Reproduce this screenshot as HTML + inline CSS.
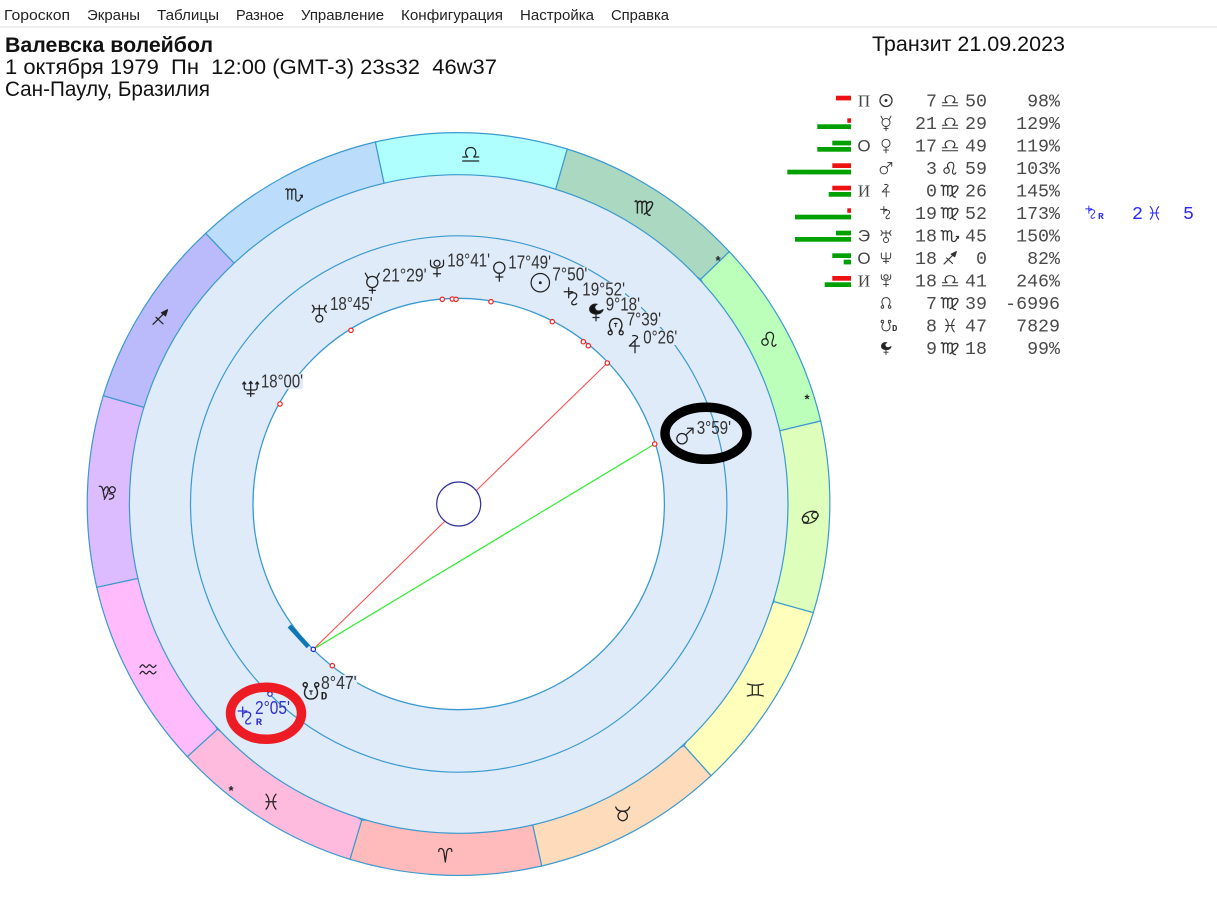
<!DOCTYPE html>
<html lang="ru"><head><meta charset="utf-8"><title>Транзит</title>
<style>
html,body{margin:0;padding:0;background:#fff;width:1217px;height:909px;overflow:hidden}
svg{display:block}
.m{font:15px "Liberation Sans","Noto Sans CJK SC",sans-serif;fill:#222}
.h{font:21px "Liberation Sans","Noto Sans CJK SC",sans-serif;fill:#111}
.l{font:18.5px "Liberation Sans",sans-serif;fill:#333}
.t{font:18.3px "Liberation Mono",monospace;fill:#4a4a4a}
.c{font:17px "Liberation Serif",serif;fill:#444}
.g{fill:none;stroke:#222;stroke-width:1.25;stroke-linecap:round;stroke-linejoin:round}
.s{fill:none;stroke:#333;stroke-width:1.3;stroke-linecap:round;stroke-linejoin:round}
.b{fill:none;stroke:#3030d8;stroke-width:1.3;stroke-linecap:round;stroke-linejoin:round}
.z path{stroke:#3a9ad0;stroke-width:1.2}
.star{font:bold 13px "Liberation Sans",sans-serif;fill:#222}
</style></head><body>
<svg xmlns="http://www.w3.org/2000/svg" width="1217" height="909" viewBox="0 0 1217 909">
<rect width="1217" height="909" fill="#fff"/>
<rect y="26" width="1217" height="2" fill="#f0f0f0"/>
<text class="m" x="4" y="20" textLength="66" lengthAdjust="spacingAndGlyphs">Гороскоп</text>
<text class="m" x="87" y="20" textLength="53" lengthAdjust="spacingAndGlyphs">Экраны</text>
<text class="m" x="157" y="20" textLength="62" lengthAdjust="spacingAndGlyphs">Таблицы</text>
<text class="m" x="236" y="20" textLength="48" lengthAdjust="spacingAndGlyphs">Разное</text>
<text class="m" x="301" y="20" textLength="83" lengthAdjust="spacingAndGlyphs">Управление</text>
<text class="m" x="401" y="20" textLength="102" lengthAdjust="spacingAndGlyphs">Конфигурация</text>
<text class="m" x="520" y="20" textLength="74" lengthAdjust="spacingAndGlyphs">Настройка</text>
<text class="m" x="611" y="20" textLength="58" lengthAdjust="spacingAndGlyphs">Справка</text>

<text class="h" x="5" y="52" style="font-weight:700" textLength="208" lengthAdjust="spacingAndGlyphs">Валевска волейбол</text>
<text class="h" x="5" y="74" xml:space="preserve" textLength="492" lengthAdjust="spacingAndGlyphs">1 октября 1979  Пн  12:00 (GMT-3) 23s32  46w37</text>
<text class="h" x="5" y="96" textLength="205" lengthAdjust="spacingAndGlyphs">Сан-Паулу, Бразилия</text>
<text class="h" x="872" y="51" textLength="193" lengthAdjust="spacingAndGlyphs">Транзит 21.09.2023</text>

<!-- zodiac ring -->
<g class="z">
<path fill="#b0ffff" d="M375.3 142A372 372 0 0 1 567.3 149L555.7 189.3L384 183.3Z"/>
<path fill="#aad8c0" d="M567.3 149A372 372 0 0 1 729.3 251.7L700.7 279.3L555.7 189.3Z"/>
<path fill="#bbffbb" d="M729.3 251.7A372 372 0 0 1 820.7 421L780 430.7L700.7 279.3Z"/>
<path fill="#ddffbb" d="M820.7 421A372 372 0 0 1 813.3 612.7L774 601.7L780 430.7Z"/>
<path fill="#ffffbb" d="M813.3 612.7A372 372 0 0 1 711 775.7L684 745.7L774 601.7Z"/>
<path fill="#fddbbb" d="M711 775.7A372 372 0 0 1 541.7 866L532.7 825L684 745.7Z"/>
<path fill="#ffbbbb" d="M541.7 866A372 372 0 0 1 350 859.3L361.7 820L532.7 825Z"/>
<path fill="#ffbbdd" d="M350 859.3A372 372 0 0 1 187.3 756.7L217.3 729.3L361.7 820Z"/>
<path fill="#ffbbfb" d="M187.3 756.7A372 372 0 0 1 96.7 587.3L138.3 578.3L217.3 729.3Z"/>
<path fill="#ddbbff" d="M96.7 587.3A372 372 0 0 1 103.3 395.7L144 407.3L138.3 578.3Z"/>
<path fill="#bbbbfb" d="M103.3 395.7A372 372 0 0 1 205.7 233.3L234 263L144 407.3Z"/>
<path fill="#bbddfb" d="M205.7 233.3A372 372 0 0 1 375.3 142L384 183.3L234 263Z"/>
</g>
<circle cx="458.7" cy="504" r="329.3" fill="#dfebf9" stroke="#3a9ad0" stroke-width="1.2"/>
<circle cx="458.7" cy="504" r="268.2" fill="#dfebf9" stroke="#3a9ad0" stroke-width="1.2"/>
<circle cx="458.7" cy="504" r="205.7" fill="#fff" stroke="#3a9ad0" stroke-width="1.3"/>

<!-- aspect lines -->
<line x1="607.3" y1="363" x2="313.3" y2="649.3" stroke="#ff5050" stroke-width="1.1"/>
<line x1="654.7" y1="444" x2="313.3" y2="649.3" stroke="#30ee30" stroke-width="1.2"/>
<circle cx="458.7" cy="504" r="22" fill="#fff" stroke="#3030a0" stroke-width="1.2"/>
<line x1="289.3" y1="626" x2="308.3" y2="646.7" stroke="#0f78b4" stroke-width="4.5"/>

<!-- points on circle -->
<g fill="#fff" stroke="#f02020" stroke-width="1.2">
<circle cx="280" cy="404" r="2.2"/><circle cx="351" cy="330.3" r="2.2"/><circle cx="442.3" cy="299.3" r="2.2"/><circle cx="452.3" cy="299" r="2.2"/><circle cx="456" cy="299.3" r="2.2"/><circle cx="491" cy="301.7" r="2.2"/><circle cx="552.3" cy="321.7" r="2.2"/><circle cx="583.3" cy="341.7" r="2.2"/><circle cx="588.3" cy="345.7" r="2.2"/><circle cx="607.3" cy="363" r="2.2"/><circle cx="654.7" cy="444" r="2.2"/><circle cx="332.3" cy="665.7" r="2.2"/>
</g>
<circle cx="313.3" cy="649.3" r="2.2" fill="#fff" stroke="#2020e0" stroke-width="1.2"/>
<circle cx="270" cy="694" r="2.2" fill="#fff" stroke="#2020e0" stroke-width="1.2"/>

<!-- label backgrounds -->
<g fill="#dfebf9">
<rect x="261" y="374" width="42" height="15"/><rect x="330" y="296" width="43" height="15"/><rect x="382" y="268" width="45" height="15"/><rect x="447" y="253" width="43" height="15"/><rect x="508" y="255" width="43" height="15"/><rect x="552" y="267" width="36" height="15"/><rect x="582" y="282" width="43" height="15"/><rect x="606" y="297" width="35" height="15"/><rect x="627" y="312" width="34" height="15"/><rect x="643" y="330" width="34" height="15"/><rect x="321" y="675" width="36" height="15"/>
</g>

<!-- chart labels -->
<g>
<text class="l" x="261" y="387.7" textLength="42" lengthAdjust="spacingAndGlyphs">18°00'</text>
<text class="l" x="330" y="310" textLength="42.7" lengthAdjust="spacingAndGlyphs">18°45'</text>
<text class="l" x="382.3" y="281.7" textLength="44.4" lengthAdjust="spacingAndGlyphs">21°29'</text>
<text class="l" x="447.3" y="266.7" textLength="42.7" lengthAdjust="spacingAndGlyphs">18°41'</text>
<text class="l" x="508.3" y="268.3" textLength="42.7" lengthAdjust="spacingAndGlyphs">17°49'</text>
<text class="l" x="552.3" y="280.7" textLength="35" lengthAdjust="spacingAndGlyphs">7°50'</text>
<text class="l" x="582.3" y="295.7" textLength="42.7" lengthAdjust="spacingAndGlyphs">19°52'</text>
<text class="l" x="605.7" y="310.7" textLength="34.3" lengthAdjust="spacingAndGlyphs">9°18'</text>
<text class="l" x="626.7" y="325.7" textLength="34.3" lengthAdjust="spacingAndGlyphs">7°39'</text>
<text class="l" x="643.3" y="343.3" textLength="34" lengthAdjust="spacingAndGlyphs">0°26'</text>
<text class="l" x="696.7" y="434" textLength="34.3" lengthAdjust="spacingAndGlyphs">3°59'</text>
<text class="l" x="321" y="689" textLength="35.7" lengthAdjust="spacingAndGlyphs">8°47'</text>
<text class="l" x="255" y="714" textLength="35" lengthAdjust="spacingAndGlyphs" style="fill:#3030c8">2°05'</text>
</g>

<!-- chart planet glyphs -->
<g class="g">
<g transform="translate(250.7 389)"><path d="M-6.5-7V-2Q-6.5 1-4 1H4Q6.5 1 6.500-2V-7M0-7.500V7.500M-3.500 4.700H3.500M-8-5L-6.500-7L-5-5M-1.500-5.500L0-7.500L1.500-5.500M5-5L6.500-7L8-5"/></g>
<g transform="translate(319.3 312.3)"><path d="M-7-7C-4.500-5-4.500-2-7 0M7-7C4.500-5 4.500-2 7 0M-5.500-3.500H5.500M0-7V3"/><circle cy="6.300" r="3.500"/></g>
<g transform="translate(372.3 282.7)"><path d="M-7-9.500L-4.500-5M7-9.500L4.500-5M0 5V10.500M-3 7.700H3"/><circle cy="-.7" r="5.600"/></g>
<g transform="translate(437 268.3)"><circle cy="-5" r="3"/><path d="M-6.500-8V-4C-6.500 1 6.500 1 6.500-4V-8M0 .5V8.500M-3.500 5.500H3.500"/></g>
<g transform="translate(499.3 270.7)"><circle cy="-3" r="5.600"/><path d="M0 2.600V10.500M-3.500 6.300H3.500"/></g>
<g transform="translate(540.3 282.7)"><circle r="9.200"/><circle r=".8" fill="#222"/></g>
<g transform="translate(571.7 296.7)"><path d="M-3-9V1M-7.500-5H1M-3-2C0-5 5-4.500 5-1C5 2 0 4 0 6C0 8.500 3 8.500 5 7"/></g>
<g transform="translate(596 311.7)"><path fill="#111" d="M-2-7.500C-7.500-6-8 1-2 2C3 3 6 1 7-2C4 0 0 0-1-3C-2-5-1-6.500 1-7.500Z"/><path d="M0 2V9M-3 5.800H3"/></g>
<g transform="translate(615.700 326.700) scale(1.1)"><path d="M-3.500 4C-7.500-1-5.500-7.500 0-7.500C5.500-7.500 7.500-1 3.500 4"/><circle cx="-5" cy="5.500" r="1.800"/><circle cx="5" cy="5.500" r="1.800"/><path d="M-1.200-3H1.200M0-3V0" stroke-width="1"/></g>
<g transform="translate(634.700 344)"><path d="M-2-8.300C1-9 3.500-7.500 2.700-6L-5.300 2H4.700M.3-3V8.700"/></g>
<g transform="translate(685 435.700)"><circle cx="-3" cy="3" r="5.200"/><path d="M.8-.8L8-7.500M2.500-7.500H8V-2.500"/></g>
<g transform="translate(311 691) scale(1.15)"><path d="M-3.500-4C-7.500 1-5.500 7 0 7C5.500 7 7.500 1 3.500-4"/><circle cx="-5" cy="-5.500" r="1.800"/><circle cx="5" cy="-5.500" r="1.800"/><path d="M-1.200 0H1.200M0 0V3" stroke-width="1"/></g>
</g>
<text x="320.7" y="699.3" style="font:bold 11px 'Liberation Mono',monospace;fill:#222">D</text>
<g class="b"><g transform="translate(245.700 716)"><path d="M-3-9V1M-7.500-5H1M-3-2C0-5 5-4.500 5-1C5 2 0 4 0 6C0 8.500 3 8.500 5 7"/></g></g>
<text x="255.700" y="725" style="font:bold 10.500px 'Liberation Mono',monospace;fill:#3030c8">R</text>

<!-- zodiac glyphs -->
<g class="g">
<g transform="translate(470.700 154)"><path d="M-8 7H8M-8 3H-3C-6.500 0-5.500-6.500 0-6.500C5.500-6.500 6.500 0 3 3H8"/></g>
<g transform="translate(644.300 207.300) scale(1.15)"><path d="M-8-5C-7-6.500-6-5-6-3V5M-6-3C-5-6-2-6-2-3V5M-2-3C-1-6 2-6 2-3V3C2 5 3 7 5 7M2-3C5-6 8-5 7-2C6 1 3 4 0 6"/></g>
<g transform="translate(769 339)"><circle cx="-4" cy="3" r="3.200"/><path d="M-2 .5C-6-7 4-9.500 4.500-3C5 0 1.500 3.500 3.500 6.500C4.500 8 6.500 7 7 5.500"/></g>
<g transform="translate(810 517.300)"><circle cx="-4.500" cy="2" r="3.200"/><circle cx="5" cy="-2" r="3.200"/><path d="M-7.700 1.500C-6.500-5 1-7 6.500-5.500M7.700-1.500C6.500 5-1 7-6.500 5.500"/></g>
<g transform="translate(755.300 690)"><path d="M-8-6C-3-4.500 3-4.500 8-6M-8 6C-3 4.500 3 4.500 8 6M-3-5V5M3-5V5"/></g>
<g transform="translate(622.700 814)"><circle cy="2" r="4.700"/><path d="M-7-7C-6-4-3-2.700 0-2.700C3-2.700 6-4 7-7"/></g>
<g transform="translate(445.300 855)"><path d="M-6.500-3.500C-7-7.500-2.500-7.500-1.500-3.500L0 7L1.500-3.500C2.500-7.500 7-7.500 6.500-3.500"/></g>
<g transform="translate(271 801.700)"><path d="M-5-7.500C-1-3-1 3-5 7.500M5-7.500C1-3 1 3 5 7.500M-5 0H5"/></g>
<g transform="translate(148 669.300)"><path d="M-8-2C-6-5-5-5-3.500-3C-2-1-1-2 0-3.500C1-5 2-5 3.500-3C5-1 6.500-2 8-4M-8 4.500C-6 1.500-5 1.500-3.500 3.500C-2 5.500-1 4.500 0 3C1 1.500 2 1.500 3.500 3.500C5 5.500 6.500 4.500 8 2.500"/></g>
<g transform="translate(107.300 492.300)"><path d="M-8-6C-6-6.500-5-5-4.500-3L-3 5M-3.500-2C-2-6 1-7 1-3C1 0-1 4-3 7"/><circle cx="5" cy="-2.500" r="3"/><path d="M2 1.500C8 1.500 8 6 2 7"/></g>
<g transform="translate(160 317.300)"><path d="M-7 7L6-6M-4 0L3 6.500"/><path d="M1.500-4.500L7.500-7.500L5.500-1.500Z" fill="#222"/></g>
<g transform="translate(294.300 194.300)"><path d="M-8.500-5C-7.500-6.500-6.500-5-6.500-3V5M-6.500-3C-5.500-6-2.500-6-2.500-3V5M-2.500-3C-1.500-6 1.500-6 1.500-3V4C1.500 7.500 5 7.500 6 4.500L8 1M6 1H8V3"/></g>
</g>
<text class="star" x="715.500" y="265">*</text>
<text class="star" x="804.500" y="403.500">*</text>
<text class="star" x="228.500" y="795">*</text>

<!-- ellipses -->
<ellipse cx="706" cy="433.300" rx="41" ry="26" fill="none" stroke="#000" stroke-width="9.500"/>
<ellipse cx="266" cy="713.300" rx="35.500" ry="26" fill="none" stroke="#ed1c24" stroke-width="9.500"/>

<!-- bars -->
<g fill="#ee1111">
<rect x="836" y="95.700" width="15" height="4.700"/><rect x="847.300" y="118.300" width="3.700" height="4.500"/><rect x="832.300" y="163.300" width="18.700" height="4.700"/><rect x="832.300" y="185.700" width="18.700" height="4.700"/><rect x="847.300" y="208.300" width="3.700" height="4.500"/><rect x="832.300" y="276" width="18.700" height="4.700"/>
</g>
<g fill="#00a000">
<rect x="817.300" y="124.300" width="33.700" height="4.700"/><rect x="832.300" y="140.700" width="18.700" height="4.700"/><rect x="817.300" y="147" width="33.700" height="4.700"/><rect x="787.300" y="169.700" width="63.700" height="4.700"/><rect x="828.700" y="192" width="22.300" height="4.700"/><rect x="795" y="214.700" width="56" height="4.700"/><rect x="836" y="230.700" width="15" height="4.700"/><rect x="795" y="237" width="56" height="4.700"/><rect x="832.300" y="253.300" width="18.700" height="4.700"/><rect x="843.700" y="259.700" width="7.300" height="4.700"/><rect x="824.700" y="282.300" width="26.300" height="4.700"/>
</g>

<!-- table letters -->
<text class="c" x="864" y="106.500" text-anchor="middle">П</text>
<text class="c" x="864" y="151.500" text-anchor="middle" style="font-family:'Liberation Sans',sans-serif">О</text>
<text class="c" x="864" y="196.500" text-anchor="middle">И</text>
<text class="c" x="864" y="241.500" text-anchor="middle" style="font-family:'Liberation Sans',sans-serif">Э</text>
<text class="c" x="864" y="264" text-anchor="middle" style="font-family:'Liberation Sans',sans-serif">О</text>
<text class="c" x="864" y="286.500" text-anchor="middle">И</text>

<!-- table planet glyphs -->
<g class="s">
<g transform="translate(886 100.500)"><circle r="6"/><circle r=".8" fill="#333"/></g>
<g transform="translate(886 123) scale(.72)"><path d="M-7-9.500L-4.500-5M7-9.500L4.500-5M0 5V10.500M-3 7.700H3"/><circle cy="-.7" r="5.600"/></g>
<g transform="translate(886 145.500) scale(.72)"><circle cy="-3" r="5.600"/><path d="M0 2.600V10.500M-3.500 6.300H3.500"/></g>
<g transform="translate(886 168) scale(.72)"><circle cx="-3" cy="3" r="5.200"/><path d="M.8-.8L8-7.500M2.500-7.500H8V-2.500"/></g>
<g transform="translate(886 190.500) scale(.72)"><path d="M-2-8.300C1-9 3.500-7.500 2.700-6L-5.300 2H4.700M.3-3V8.700"/></g>
<g transform="translate(886 213) scale(.72)"><path d="M-3-9V1M-7.500-5H1M-3-2C0-5 5-4.500 5-1C5 2 0 4 0 6C0 8.500 3 8.500 5 7"/></g>
<g transform="translate(886 235.500) scale(.72)"><path d="M-7-7C-4.500-5-4.500-2-7 0M7-7C4.500-5 4.500-2 7 0M-5.500-3.500H5.500M0-7V3"/><circle cy="6.300" r="3.500"/></g>
<g transform="translate(886 258) scale(.72)"><path d="M-6.500-7V-2Q-6.500 1-4 1H4Q6.500 1 6.500-2V-7M0-7.500V7.500M-3.500 4.700H3.500"/></g>
<g transform="translate(886 280.500) scale(.72)"><circle cy="-5" r="3"/><path d="M-6.500-8V-4C-6.500 1 6.500 1 6.500-4V-8M0 .5V8.500M-3.500 5.500H3.500"/></g>
<g transform="translate(886 303) scale(.72)"><path d="M-3.500 4C-7.500-1-5.500-7.500 0-7.500C5.500-7.500 7.500-1 3.500 4"/><circle cx="-5" cy="5.500" r="1.800"/><circle cx="5" cy="5.500" r="1.800"/></g>
<g transform="translate(886 325.500) scale(.72)"><path d="M-3.500-4C-7.500 1-5.500 7.500 0 7.500C5.500 7.500 7.500 1 3.500-4"/><circle cx="-5" cy="-5.500" r="1.800"/><circle cx="5" cy="-5.500" r="1.800"/></g>
<g transform="translate(886 348) scale(.72)"><path fill="#222" d="M-2-7.500C-7.500-6-8 1-2 2C3 3 6 1 7-2C4 0 0 0-1-3C-2-5-1-6.500 1-7.500Z"/><path d="M0 2V9M-3 5.800H3"/></g>
</g>
<text x="892" y="331" style="font:bold 9px 'Liberation Mono',monospace;fill:#333">D</text>

<!-- table sign glyphs -->
<g class="s">
<g transform="translate(950 100.500) scale(.95 .75)"><path d="M-8 7H8M-8 3H-3C-6.500 0-5.500-6.500 0-6.500C5.500-6.500 6.500 0 3 3H8"/></g>
<g transform="translate(950 123) scale(.95 .75)"><path d="M-8 7H8M-8 3H-3C-6.500 0-5.500-6.500 0-6.500C5.500-6.500 6.500 0 3 3H8"/></g>
<g transform="translate(950 145.500) scale(.95 .75)"><path d="M-8 7H8M-8 3H-3C-6.500 0-5.500-6.500 0-6.500C5.500-6.500 6.500 0 3 3H8"/></g>
<g transform="translate(950 168) scale(.85)"><circle cx="-4" cy="3" r="3.200"/><path d="M-2 .5C-6-7 4-9.500 4.500-3C5 0 1.500 3.500 3.500 6.500C4.500 8 6.500 7 7 5.500"/></g>
<g transform="translate(950 190.500) scale(1.1 .95)"><path d="M-8-5C-7-6.500-6-5-6-3V5M-6-3C-5-6-2-6-2-3V5M-2-3C-1-6 2-6 2-3V3C2 5 3 7 5 7M2-3C5-6 8-5 7-2C6 1 3 4 0 6"/></g>
<g transform="translate(950 213) scale(1.1 .95)"><path d="M-8-5C-7-6.500-6-5-6-3V5M-6-3C-5-6-2-6-2-3V5M-2-3C-1-6 2-6 2-3V3C2 5 3 7 5 7M2-3C5-6 8-5 7-2C6 1 3 4 0 6"/></g>
<g transform="translate(950 235.500) scale(1.05 .9)"><path d="M-8.500-5C-7.500-6.500-6.500-5-6.500-3V5M-6.500-3C-5.500-6-2.500-6-2.500-3V5M-2.500-3C-1.500-6 1.500-6 1.500-3V4C1.500 7.500 5 7.500 6 4.500L8 1M6 1H8V3"/></g>
<g transform="translate(950 258) scale(.85)"><path d="M-7 7L6-6M-4 0L3 6.500"/><path d="M1.500-4.500L7.500-7.500L5.500-1.500Z" fill="#333"/></g>
<g transform="translate(950 280.500) scale(.95 .75)"><path d="M-8 7H8M-8 3H-3C-6.500 0-5.500-6.500 0-6.500C5.500-6.500 6.500 0 3 3H8"/></g>
<g transform="translate(950 303) scale(1.1 .95)"><path d="M-8-5C-7-6.500-6-5-6-3V5M-6-3C-5-6-2-6-2-3V5M-2-3C-1-6 2-6 2-3V3C2 5 3 7 5 7M2-3C5-6 8-5 7-2C6 1 3 4 0 6"/></g>
<g transform="translate(950 325.500) scale(.85)"><path d="M-5-7.500C-1-3-1 3-5 7.500M5-7.500C1-3 1 3 5 7.500M-5 0H5"/></g>
<g transform="translate(950 348) scale(1.1 .95)"><path d="M-8-5C-7-6.500-6-5-6-3V5M-6-3C-5-6-2-6-2-3V5M-2-3C-1-6 2-6 2-3V3C2 5 3 7 5 7M2-3C5-6 8-5 7-2C6 1 3 4 0 6"/></g>
</g>

<!-- table numbers -->
<g class="t" text-anchor="end">
<text x="937" y="106.500">7</text><text x="987" y="106.500">50</text><text x="1060" y="106.500">98%</text>
<text x="937" y="129">21</text><text x="987" y="129">29</text><text x="1060" y="129">129%</text>
<text x="937" y="151.500">17</text><text x="987" y="151.500">49</text><text x="1060" y="151.500">119%</text>
<text x="937" y="174">3</text><text x="987" y="174">59</text><text x="1060" y="174">103%</text>
<text x="937" y="196.500">0</text><text x="987" y="196.500">26</text><text x="1060" y="196.500">145%</text>
<text x="937" y="219">19</text><text x="987" y="219">52</text><text x="1060" y="219">173%</text>
<text x="937" y="241.500">18</text><text x="987" y="241.500">45</text><text x="1060" y="241.500">150%</text>
<text x="937" y="264">18</text><text x="987" y="264">0</text><text x="1060" y="264">82%</text>
<text x="937" y="286.500">18</text><text x="987" y="286.500">41</text><text x="1060" y="286.500">246%</text>
<text x="937" y="309">7</text><text x="987" y="309">39</text><text x="1060" y="309">-6996</text>
<text x="937" y="331.500">8</text><text x="987" y="331.500">47</text><text x="1060" y="331.500">7829</text>
<text x="937" y="354">9</text><text x="987" y="354">18</text><text x="1060" y="354">99%</text>
</g>

<!-- transit -->
<g class="b" style="stroke:#2a2aff">
<g transform="translate(1091 212.500) scale(.72)"><path d="M-3-9V1M-7.500-5H1M-3-2C0-5 5-4.500 5-1C5 2 0 4 0 6C0 8.500 3 8.500 5 7"/></g>
<g transform="translate(1154.500 213) scale(.85)"><path d="M-5-7.500C-1-3-1 3-5 7.500M5-7.500C1-3 1 3 5 7.500M-5 0H5"/></g>
</g>
<text x="1098" y="219" style="font:bold 9.500px 'Liberation Mono',monospace;fill:#2a2aff">R</text>
<text x="1143" y="219" text-anchor="end" style="font:18.300px 'Liberation Mono',monospace;fill:#2a2aff">2</text>
<text x="1194" y="219" text-anchor="end" style="font:18.300px 'Liberation Mono',monospace;fill:#2a2aff">5</text>
</svg>
</body></html>
